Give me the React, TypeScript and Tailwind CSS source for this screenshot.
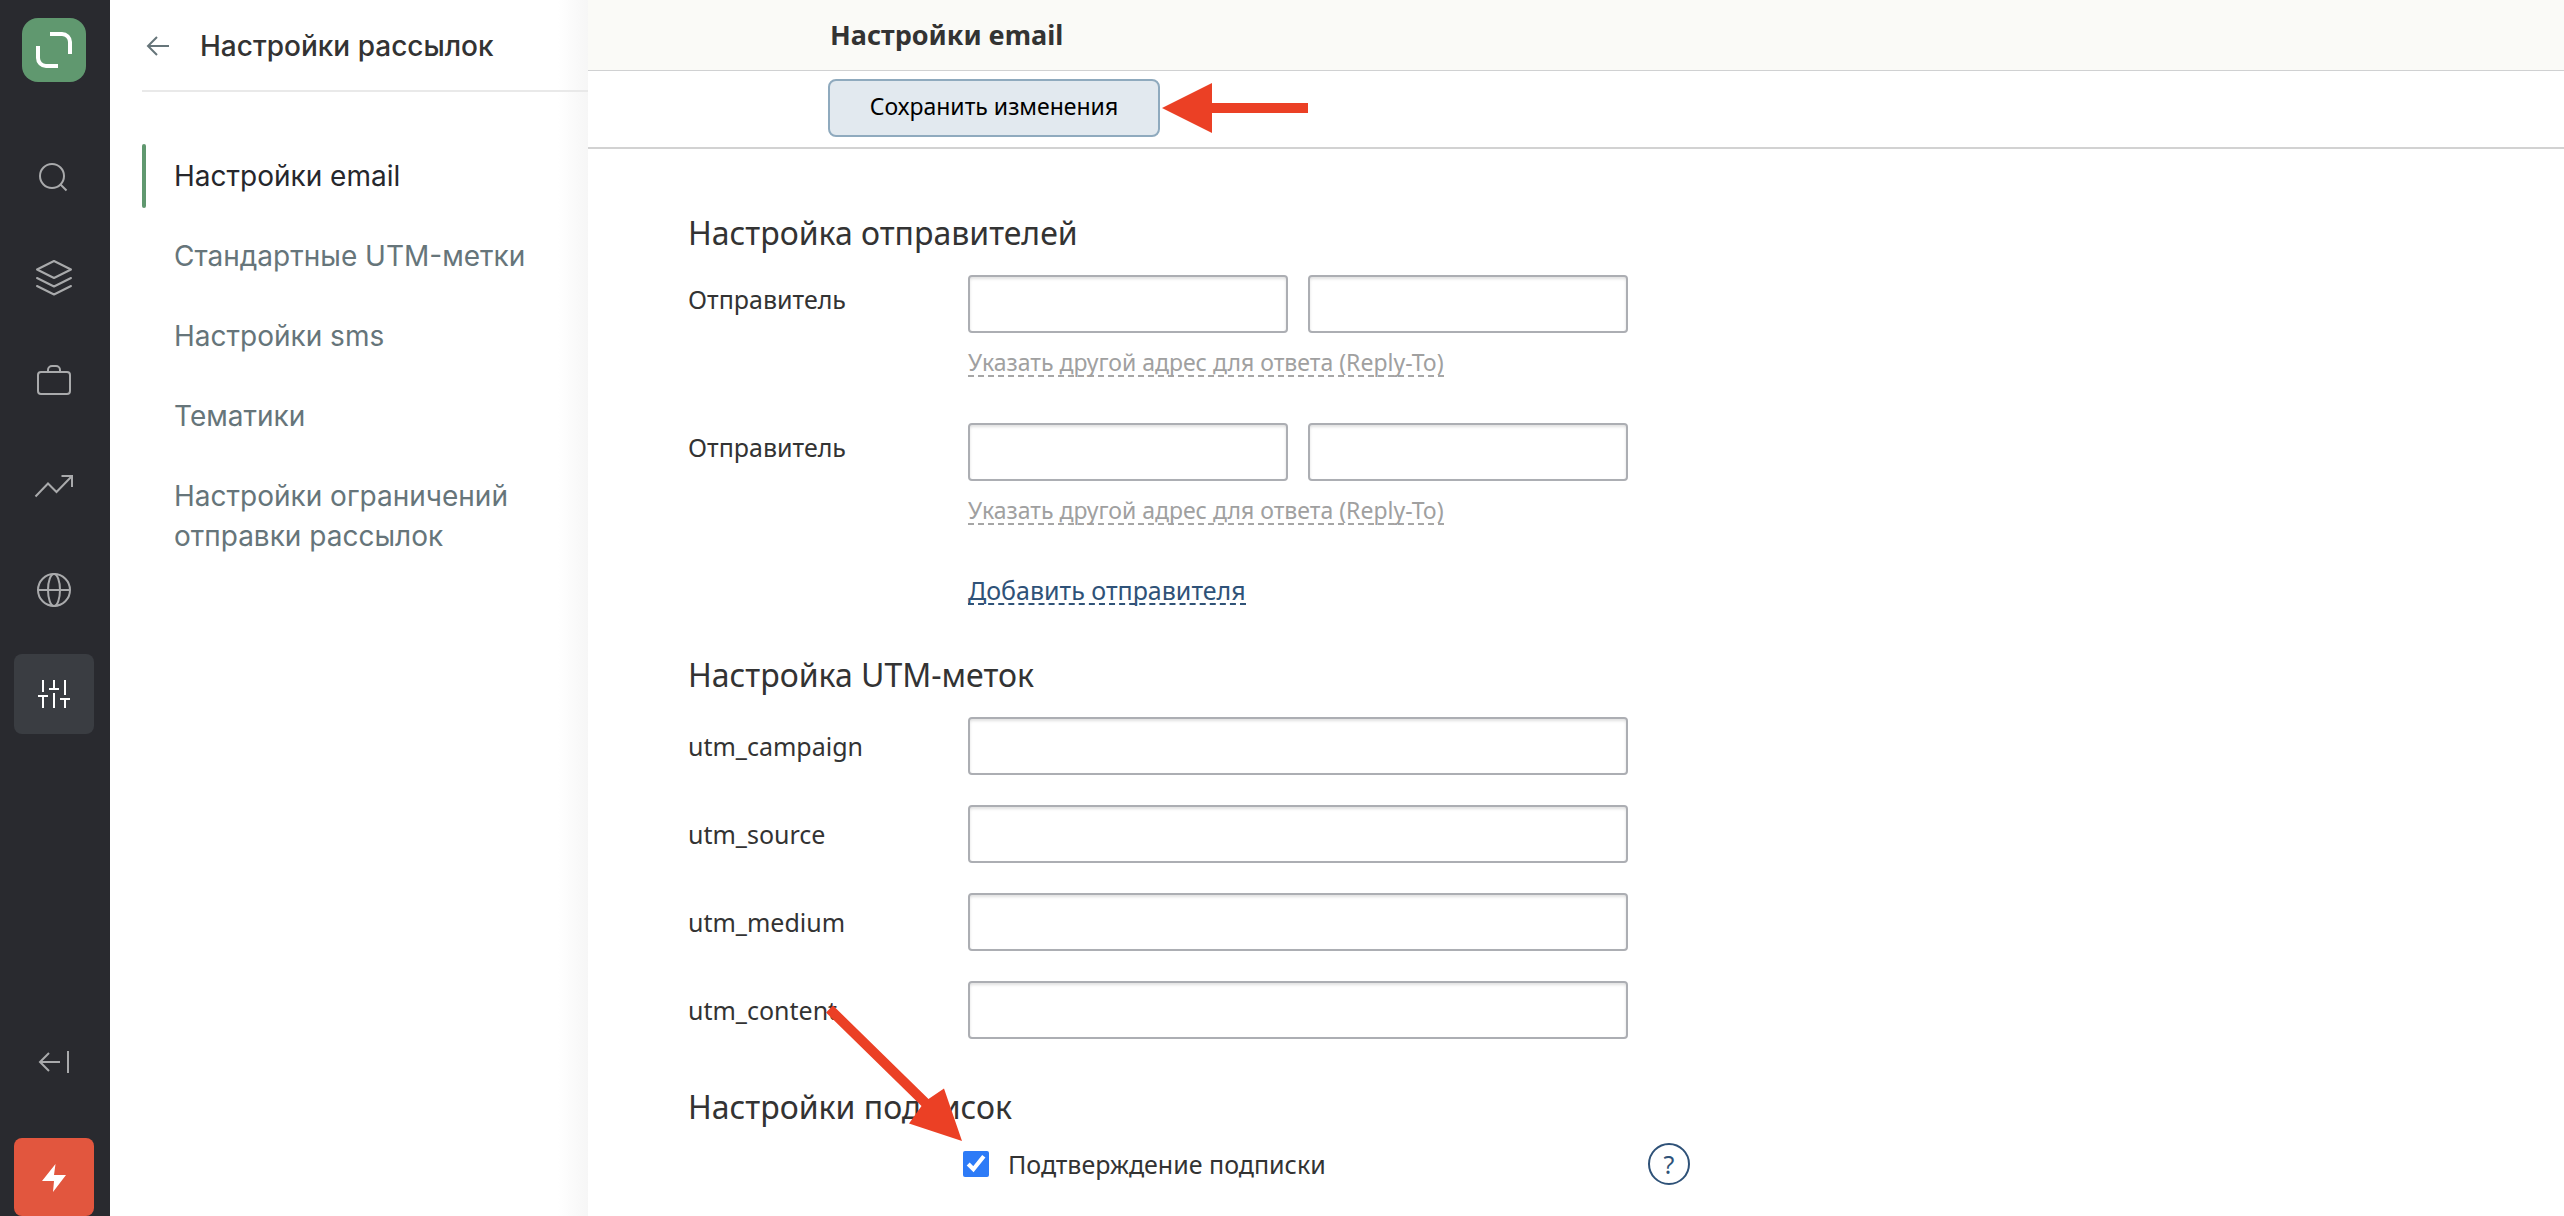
import React, { useState } from 'react';

interface MenuItem {
  id: string;
  title: string;
}

interface RailItem {
  id: string;
  title: string;
  icon: React.ReactNode;
}

const menuItems: MenuItem[] = [
  { id: 'email', title: 'Настройки email' },
  { id: 'utm', title: 'Стандартные UTM-метки' },
  { id: 'sms', title: 'Настройки sms' },
  { id: 'topics', title: 'Тематики' },
  { id: 'limits', title: 'Настройки ограничений отправки рассылок' },
];

const utmFields = ['utm_campaign', 'utm_source', 'utm_medium', 'utm_content'];

const Icon = ({ children }: { children: React.ReactNode }) => (
  <svg viewBox="0 0 40 40" className="size-10" fill="none" stroke="currentColor" strokeWidth="2" aria-hidden="true">
    {children}
  </svg>
);

const railItems: RailItem[] = [
  {
    id: 'search',
    title: 'Поиск',
    icon: (
      <Icon>
        <circle cx="18" cy="22" r="12" />
        <path d="M26.5 30.5L32.5 36.5" />
      </Icon>
    ),
  },
  {
    id: 'layers',
    title: 'Каналы',
    icon: (
      <Icon>
        <path d="M3 11.5L20 3l17 8.5L20 20zM3 20l17 8.5L37 20M3 28l17 8.5L37 28" strokeLinejoin="round" strokeLinecap="round" />
      </Icon>
    ),
  },
  {
    id: 'briefcase',
    title: 'Продукты',
    icon: (
      <Icon>
        <rect x="4" y="10" width="32" height="22" rx="3" />
        <path d="M14 10V8a4 4 0 0 1 4-4h4a4 4 0 0 1 4 4v2" />
      </Icon>
    ),
  },
  {
    id: 'reports',
    title: 'Отчёты',
    icon: (
      <Icon>
        <path d="M1.5 30.5L14 17.5l8.5 8.5L38 10M27.5 10H38v11" />
      </Icon>
    ),
  },
  {
    id: 'sites',
    title: 'Сайты',
    icon: (
      <Icon>
        <circle cx="20" cy="20" r="16" />
        <ellipse cx="20" cy="20" rx="6" ry="16" />
        <path d="M4 20h32" />
      </Icon>
    ),
  },
  {
    id: 'settings',
    title: 'Настройки',
    icon: (
      <Icon>
        <path d="M9 6v12M4 22h10M9 22v12M20 6v9M15 15h10M20 19v15M31 6v15M26 25h10M31 25v9" />
      </Icon>
    ),
  },
];

const inputClass =
  'h-[58px] w-full min-w-0 rounded border-2 border-[#acaeb3] bg-white px-3 text-2xl shadow-[inset_0_2px_3px_rgba(0,0,0,0.12)] outline-none';

const Rail = () => (
  <aside className="sticky top-0 flex h-screen w-[110px] shrink-0 flex-col items-center overflow-hidden bg-[#292a2f] pt-[18px] pr-0.5 text-[#a9aaac]">
    <a href="#" aria-label="Главная" className="size-16 rounded-2xl bg-[#60986f]">
      <svg viewBox="0 0 64 64" fill="none" stroke="#fff" strokeWidth="4" aria-hidden="true">
        <path d="M28 16h12a8 8 0 0 1 8 8v12M16 28v12a8 8 0 0 0 8 8h12" />
      </svg>
    </a>
    <nav className="mt-[52px] flex flex-col gap-6">
      {railItems.map((item) => (
        <button
          key={item.id}
          aria-label={item.title}
          className={
            item.id === 'settings'
              ? 'flex size-20 items-center justify-center rounded-lg bg-[#3a3d42] text-white'
              : 'flex size-20 items-center justify-center rounded-lg'
          }
        >
          {item.icon}
        </button>
      ))}
    </nav>
    <button aria-label="Свернуть меню" className="mt-auto flex size-20 items-center justify-center">
      <Icon>
        <path d="M26 20H6M15 11l-9 9 9 9M34 9v22" />
      </Icon>
    </button>
    <button aria-label="Быстрые действия" className="mt-9 flex h-[78px] w-20 shrink-0 items-center justify-center rounded-lg bg-[#e2563e] text-white">
      <svg viewBox="0 0 40 40" className="size-10" fill="currentColor" aria-hidden="true">
        <path d="M21.5 7L20 18h12L19 35l1-11H8z" />
      </svg>
    </button>
  </aside>
);

const SideMenu = () => {
  const [active, setActive] = useState<string>('email');

  return (
    <div className="w-[478px] shrink-0 bg-[linear-gradient(to_left,#f6f6f6,#fff_30px)] pl-8 font-['Inter',sans-serif]">
      <div className="flex h-[92px] items-center border-b-2 border-[#e9e9e9] pt-0.5">
        <button aria-label="Назад" className="text-[#66757a]">
          <Icon>
            <path d="M27 20H6M15 11l-9 9 9 9" />
          </Icon>
        </button>
        <h1 className="ml-[18px] text-[28px] leading-10 font-medium text-[#333]">Настройки рассылок</h1>
      </div>
      <nav className="mt-[52px] flex flex-col gap-4">
        {menuItems.map((item) => (
          <a
            key={item.id}
            href={`#${item.id}`}
            onClick={() => setActive(item.id)}
            className={
              item.id === active
                ? 'flex text-[28px] leading-10 text-[#26272c]'
                : 'flex text-[28px] leading-10 text-[#66757a]'
            }
          >
            <span className={item.id === active ? 'w-1 shrink-0 rounded-full bg-[#60986f]' : 'w-1 shrink-0'} />
            <span className="py-3 pr-10 pl-7">{item.title}</span>
          </a>
        ))}
      </nav>
    </div>
  );
};

const Sender = ({ index }: { index: number }) => (
  <div className="flex">
    <label htmlFor={`sender-${index}`} className="w-[280px] shrink-0 pt-1 text-[25px] leading-10">
      Отправитель
    </label>
    <div className="w-[660px]">
      <div className="grid grid-cols-2 gap-5">
        <input id={`sender-${index}`} type="text" className={inputClass} />
        <input type="email" aria-label="Адрес отправителя" className={inputClass} />
      </div>
      <button type="button" className="mt-3 block border-b-2 border-dashed border-[#a6a6a6] pt-1 text-[23px] leading-[26px] text-[#a0a0a0]">
        Указать другой адрес для ответа (Reply-To)
      </button>
    </div>
  </div>
);

const App = () => {
  const [confirm, setConfirm] = useState<boolean>(true);

  return (
    <div className="flex min-h-screen bg-white">
      <Rail />
      <SideMenu />
      <main className="min-w-0 flex-1 bg-white font-['Noto_Sans',sans-serif] text-[#333]">
        <header className="flex h-[71px] items-center border-b border-[#d0d1d2] bg-[#fafaf7] pl-[242px]">
          <h2 className="text-[27px] leading-10 font-bold">Настройки email</h2>
        </header>
        <div className="flex h-[78px] items-start border-b-2 border-[#d2d2d2] pt-2 pl-60">
          <div className="relative">
            <button type="submit" form="email-settings" className="h-[58px] w-[332px] rounded-lg border-2 border-[#8faabe] bg-[#e2e9ef] pb-1 text-[23px] text-black">
              Сохранить изменения
            </button>
            <svg viewBox="0 0 146 50" className="pointer-events-none absolute top-1 left-[334px] h-[50px] w-[146px]" fill="#eb4025" aria-hidden="true">
              <path d="M0 25L50 0v20h96v10H50v20z" />
            </svg>
          </div>
        </div>

        <form id="email-settings" onSubmit={(e) => e.preventDefault()} className="pt-[60px] pb-6 pl-[100px]">
          <h3 className="text-[32px] leading-[48px]">Настройка отправителей</h3>
          <div className="mt-[18px] flex flex-col gap-[46px]">
            <Sender index={1} />
            <Sender index={2} />
          </div>
          <button type="button" className="mt-12 ml-[280px] block border-b-2 border-dashed border-[#2f5278] pt-1 text-[25px] leading-[26px] text-[#2f5278]">
            Добавить отправителя
          </button>

          <h3 className="mt-[46px] text-[32px] leading-[48px]">Настройка UTM-меток</h3>
          <div className="mt-[18px] flex flex-col gap-[30px]">
            {utmFields.map((name) => (
              <div key={name} className="relative flex items-center">
                <label htmlFor={name} className="w-[280px] shrink-0 text-[25px] leading-10">
                  {name}
                </label>
                <div className="w-[660px]">
                  <input id={name} type="text" className={inputClass} />
                </div>
                {name === 'utm_content' && (
                  <svg viewBox="0 0 136 136" className="pointer-events-none absolute top-6 left-[138px] z-10 size-[136px]" fill="#eb4025" aria-hidden="true">
                    <path d="M0 7.5L7 0.5 102.5 94 118 83.5 136 136 83 118.5 95.5 101z" />
                  </svg>
                )}
              </div>
            ))}
          </div>

          <h3 className="mt-11 text-[32px] leading-[48px]">Настройки подписок</h3>
          <div className="mt-3 flex items-center pl-[275px]">
            <input
              id="confirm"
              type="checkbox"
              checked={confirm}
              onChange={(e) => setConfirm(e.target.checked)}
              className="size-[26px] accent-[#2d7bf7]"
            />
            <label htmlFor="confirm" className="w-[639px] pl-[19px] text-[25px] leading-10">
              Подтверждение подписки
            </label>
            <button type="button" aria-label="Справка" className="ml-5 size-[42px] rounded-full border-2 border-[#2f5278] text-[25px] leading-9 text-[#2f5278]">
              ?
            </button>
          </div>
        </form>
      </main>
    </div>
  );
};

export default App;
